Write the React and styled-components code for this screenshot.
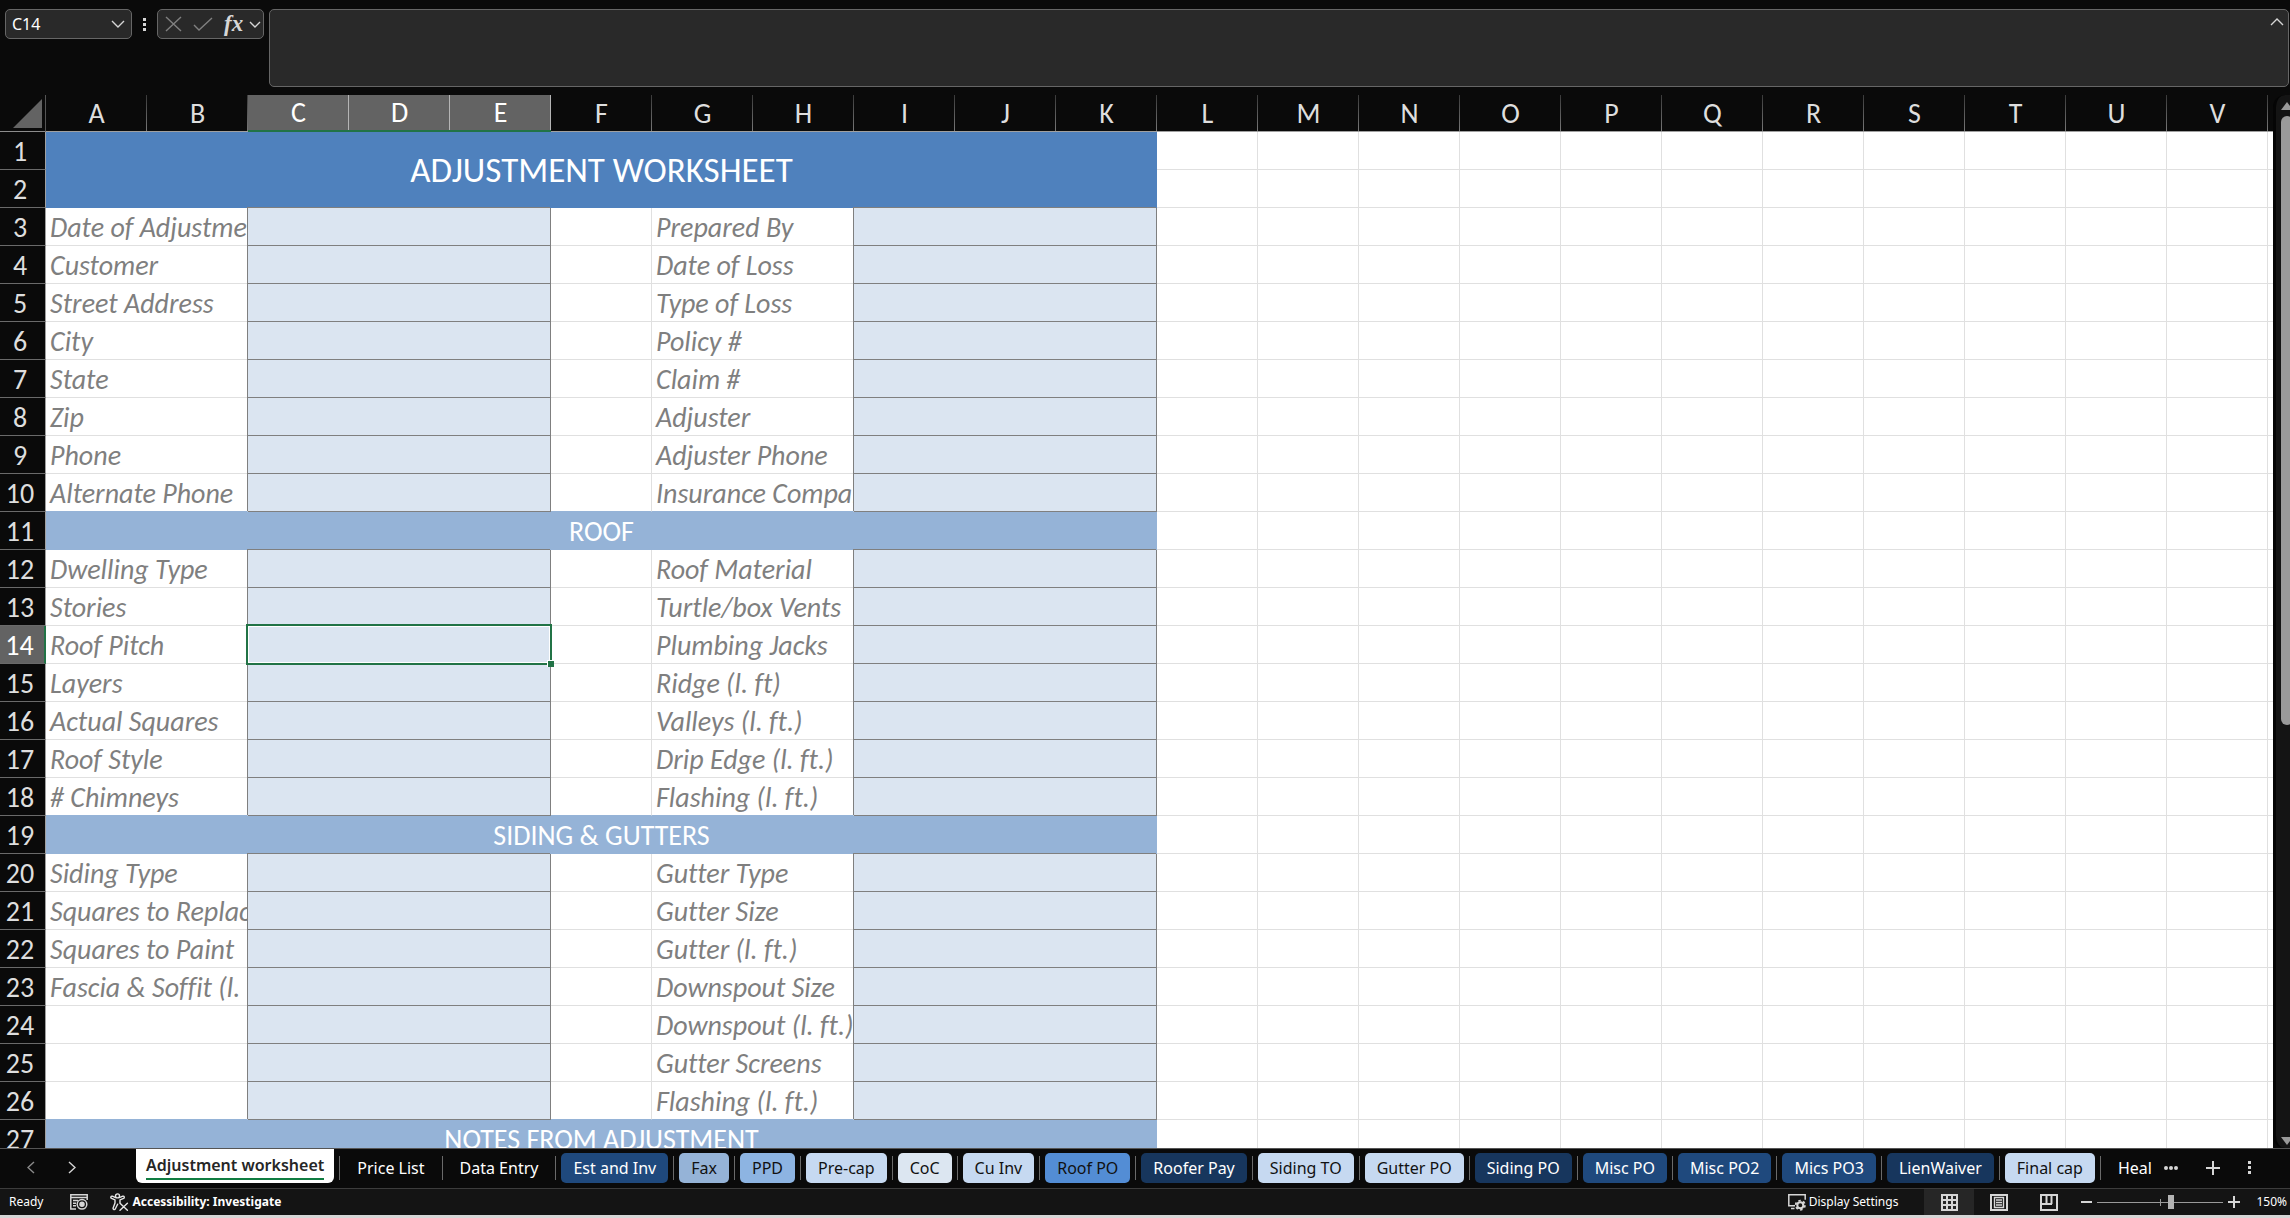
import React, { useState } from 'react'
import styled, { createGlobalStyle, css } from 'styled-components'

const GlobalStyle = createGlobalStyle`
    * {
        box-sizing: border-box;
    }
    body {
        margin: 0;
        background: #0a0a0a;
        overflow: hidden;
    }
    button, input, textarea {
        font: inherit;
        color: inherit;
        margin: 0;
    }
    svg {
        display: block;
        flex: none;
    }
`;

const uiFont = `"Segoe UI", "Noto Sans", "Open Sans", sans-serif`;
const sheetFont = `Calibri, Carlito, Lato, sans-serif`;

const lineColor = '#e0e0e0';
const inputLine = '#7f7f7f';
const sectionColor = '#95b3d7';

/* ---------- frame ---------- */

const Page = styled.div`
    display: flex;
    flex-direction: column;
    height: 100vh;
    font-family: ${uiFont};
    color: #fff;
    background: #0a0a0a;
`;

const IconButton = styled.button`
    display: flex;
    align-items: center;
    justify-content: center;
    padding: 0;
    border: 0;
    background: none;
    color: ${props => props.$color || '#d6d6d6'};
`;

/* ---------- formula bar ---------- */

const FormulaBar = styled.div`
    display: flex;
    align-items: flex-start;
    height: 95px;
    padding: 9px 1px 0 5px;
`;

const Box = styled.div`
    display: flex;
    align-items: center;
    height: 30px;
    background: #292929;
    border: 1px solid #666;
    border-radius: 5px;
`;

const NameBox = styled(Box)`
    width: 127px;
    padding: 0 6px;
`;

const NameInput = styled.input`
    flex: 1;
    min-width: 0;
    padding: 0;
    border: 0;
    outline: 0;
    background: none;
    font-size: 16px;
    line-height: 28px;
`;

const Grip = styled.div`
    display: flex;
    justify-content: center;
    width: 25px;
    padding-top: 9px;
    color: #d6d6d6;
`;

const FxBox = styled(Box)`
    width: 107px;
    padding: 0 2px 0 7px;
    gap: 11px;
`;

const FxButton = styled(IconButton)`
    font-family: "Liberation Serif", serif;
    font-style: italic;
    font-weight: 700;
    font-size: 23px;
    line-height: 28px;
    gap: 6px;
`;

const FormulaBox = styled(Box)`
    flex: 1;
    align-items: flex-start;
    height: 78px;
    margin-left: 5px;
    padding: 7px 4px;
`;

const FormulaInput = styled.textarea`
    flex: 1;
    height: 60px;
    padding: 0;
    border: 0;
    outline: 0;
    resize: none;
    background: none;
    font-size: 16px;
`;

/* ---------- sheet ---------- */

const SheetArea = styled.div`
    display: flex;
    flex: 1;
    min-height: 0;
`;

const SheetView = styled.div`
    flex: 1;
    min-width: 0;
    overflow: hidden;
`;

const Table = styled.table`
    width: 0;
    table-layout: fixed;
    border-collapse: separate;
    border-spacing: 0;
    font-family: ${sheetFont};
    font-size: 28px;
    font-variant-ligatures: none;
    line-height: 35px;
    background: #fff;
`;

const HeadCol = styled.col`
    width: 46px;
`;

const Col = styled.col`
    width: 101px;
`;

const Corner = styled.th`
    padding: 4px 3px 3px 13px;
    background: #0a0a0a;
    border-right: 1px solid #555;
    border-bottom: 1px solid #8c8c8c;
`;

const ColHead = styled.th`
    height: 37px;
    padding: 1px 0 0;
    font-weight: 400;
    line-height: 34px;
    color: #dedede;
    background: linear-gradient(#3a3a3a, #777) right / 1px 100% no-repeat #0a0a0a;
    border-bottom: 1px solid #a0a0a0;

    ${props => props.$active && css`
        color: #fff;
        background: linear-gradient(#b5b5b5, #b5b5b5) right / 1px 100% no-repeat #636363;
        border-bottom: 2px solid #217346;
    `}
`;

const RowHead = styled.th`
    height: 38px;
    padding: 2px 5px 0 0;
    font-weight: 400;
    text-align: center;
    color: ${props => props.$active ? '#fff' : '#dedede'};
    background: ${props => props.$active ? '#636363' : '#0a0a0a'};
    border-right: ${props => props.$active ? '2px solid #217346' : '1px solid #a0a0a0'};
    border-bottom: 1px solid #6a6a6a;
`;

const Cell = styled.td`
    position: relative;
    padding: 2px 0 0 4px;
    overflow: hidden;
    white-space: nowrap;
    border-right: 1px solid ${lineColor};
    border-bottom: 1px solid ${props => props.$edge ? sectionColor : lineColor};
`;

const LabelCell = styled(Cell)`
    font-style: italic;
    color: #7f7f7f;
`;

const InputCell = styled(Cell)`
    overflow: visible;
    background: #dbe5f1;
    border-right: 1px solid ${inputLine};
    border-bottom: 1px solid ${inputLine};
    box-shadow: -1px -1px 0 0 ${inputLine};
`;

const SectionCell = styled.td`
    padding: 1px 0 0;
    text-align: center;
    color: #fff;
    background: ${props => props.$title ? '#4f81bd' : sectionColor};
    font-size: ${props => props.$title ? '35px' : '28px'};
`;

const Selection = styled.div`
    position: absolute;
    inset: -2px;
    z-index: 1;
    border: 2px solid #217346;
    box-shadow: inset 0 0 0 1px #fff;

    &::after {
        content: '';
        position: absolute;
        right: -4px;
        bottom: -4px;
        width: 6px;
        height: 6px;
        background: #217346;
        border: 1px solid #fff;
        border-width: 1px 0 0 1px;
    }
`;

const Scrollbar = styled.div`
    display: flex;
    flex-direction: column;
    width: 17px;
    padding: 7px 0 3px 5px;
    overflow: hidden;
    background: #141414;
    border-left: 3px solid #050505;
    border-radius: 12px 0 0 12px;
    color: #9a9a9a;
`;

const ScrollTrack = styled.div`
    flex: 1;
    padding: 6px 0;
`;

const ScrollThumb = styled.div`
    width: 12px;
    height: 60%;
    background: #9a9a9a;
    border-radius: 6px;
`;

/* ---------- tabs ---------- */

const TabBar = styled.div`
    display: flex;
    height: 40px;
    border-top: 1px solid #555;
`;

const TabNav = styled.div`
    display: flex;
    align-items: flex-start;
    gap: 33px;
    width: 136px;
    padding: 12px 0 0 27px;
`;

const TabList = styled.div`
    display: flex;
    flex: 1;
    min-width: 0;
    overflow: hidden;
`;

const TabItem = styled.div`
    display: flex;
    flex: none;
    align-items: flex-start;

    &::after {
        content: '';
        width: 1px;
        height: 24px;
        margin: 7px 5px 0;
        background: #6a6a6a;
    }
`;

const Tab = styled.button`
    height: 30px;
    margin-top: 4px;
    padding: 0 12px;
    border: 0;
    border-radius: 5px;
    font-size: 16px;
    line-height: 30px;
    white-space: nowrap;
    color: ${props => props.$dark ? '#111' : '#fff'};
    background: ${props => props.$bg || 'transparent'};
`;

const ActiveTab = styled(Tab)`
    height: 35px;
    margin-top: -1px;
    padding: 4px 10px 3px;
    border-radius: 0 0 6px 6px;
    font-weight: 600;
    line-height: 26px;
    color: #262626;
    background: #fff;

    span {
        display: block;
        height: 28px;
        border-bottom: 2px solid #107c41;
    }
`;

const TabTools = styled.div`
    display: flex;
    align-items: flex-start;
    gap: 28px;
    padding: 12px 38px 0 12px;
`;

/* ---------- status bar ---------- */

const StatusBar = styled.div`
    display: flex;
    align-items: center;
    height: 30px;
    padding: 0 3px 0 9px;
    border-top: 1px solid #3c3c3c;
    border-bottom: 3px solid #d6d6d6;
    background: #141414;
    font-size: 12px;
    line-height: 26px;
`;

const StatusItem = styled.div`
    display: flex;
    align-items: center;
    gap: 3px;
    margin-right: ${props => props.$space || 0}px;
    font-weight: ${props => props.$bold ? 700 : 400};
`;

const Spacer = styled.div`
    flex: 1;
`;

const ViewButton = styled(IconButton)`
    width: 50px;
    height: 26px;
    background: ${props => props.$active ? '#262626' : 'none'};
`;

const Zoom = styled.div`
    display: flex;
    align-items: center;
    gap: 5px;
    margin: 0 16px 0 7px;
`;

const ZoomSlider = styled.input`
    appearance: none;
    width: 126px;
    height: 14px;
    background:
        linear-gradient(#9a9a9a, #9a9a9a) center / 100% 1px no-repeat,
        linear-gradient(#9a9a9a, #9a9a9a) center / 1px 7px no-repeat;

    &::-webkit-slider-thumb {
        appearance: none;
        width: 6px;
        height: 14px;
        background: #b3b3b3;
    }
`;

const fields = [
    ['Date of Adjustment', 'Prepared By'],
    ['Customer', 'Date of Loss'],
    ['Street Address', 'Type of Loss'],
    ['City', 'Policy #'],
    ['State', 'Claim #'],
    ['Zip', 'Adjuster'],
    ['Phone', 'Adjuster Phone'],
    ['Alternate Phone', 'Insurance Company'],
    'ROOF',
    ['Dwelling Type', 'Roof Material'],
    ['Stories', 'Turtle/box Vents'],
    ['Roof Pitch', 'Plumbing Jacks'],
    ['Layers', 'Ridge (l. ft)'],
    ['Actual Squares', 'Valleys (l. ft.)'],
    ['Roof Style', 'Drip Edge (l. ft.)'],
    ['# Chimneys', 'Flashing (l. ft.)'],
    'SIDING & GUTTERS',
    ['Siding Type', 'Gutter Type'],
    ['Squares to Replace', 'Gutter Size'],
    ['Squares to Paint', 'Gutter (l. ft.)'],
    ['Fascia & Soffit (l. ft.)', 'Downspout Size'],
    ['', 'Downspout (l. ft.)'],
    ['', 'Gutter Screens'],
    ['', 'Flashing (l. ft.)'],
    'NOTES FROM ADJUSTMENT',
];

const tabs = [
    { name: 'Price List' },
    { name: 'Data Entry' },
    { name: 'Est and Inv', bg: '#1f497d' },
    { name: 'Fax', bg: '#95b3d7', dark: true },
    { name: 'PPD', bg: '#8db4e2', dark: true },
    { name: 'Pre-cap', bg: '#c6d9f1', dark: true },
    { name: 'CoC', bg: '#dce6f1', dark: true },
    { name: 'Cu Inv', bg: '#c6d9f1', dark: true },
    { name: 'Roof PO', bg: '#538dd5', dark: true },
    { name: 'Roofer Pay', bg: '#17365d' },
    { name: 'Siding TO', bg: '#c6d9f1', dark: true },
    { name: 'Gutter PO', bg: '#c6d9f1', dark: true },
    { name: 'Siding PO', bg: '#17365d' },
    { name: 'Misc PO', bg: '#1f497d' },
    { name: 'Misc PO2', bg: '#1f497d' },
    { name: 'Mics PO3', bg: '#1f497d' },
    { name: 'LienWaiver', bg: '#17365d' },
    { name: 'Final cap', bg: '#c6d9f1', dark: true },
    { name: 'Heal' },
];

const columns = 'ABCDEFGHIJKLMNOPQRSTUV'.split('');
const activeColumns = ['C', 'D', 'E'];
const activeRow = 14;
// one unnamed column runs off the right edge
const freeColumns = [...columns.slice(11), 'rest'];

const Stroke = ({ w, h, d, width = 1.4 }) => (
    <svg width={w} height={h} viewBox={`0 0 ${w} ${h}`} fill="none" stroke="currentColor" strokeWidth={width}>
        <path d={d}/>
    </svg>
)

const Dots = ({ vertical }) => (
    <svg width={vertical ? 4 : 14} height={14} fill="currentColor">
        {[0, 5, 10].map(n => vertical
            ? <rect key={n} x="0" y={n} width="3" height="3"/>
            : <circle key={n} cx={n + 2} cy="7" r="2"/>)}
    </svg>
)

const MacroIcon = () => (
    <svg width="18" height="16" viewBox="0 0 18 16" fill="none" stroke="#d6d6d6" strokeWidth="1.5">
        <path d="M6 15H.8V.8h16.4V6M1 3.6h16M3 6.6h5M3 9.2h3M3 11.8h3"/>
        <circle cx="12" cy="10.3" r="4.8"/>
        <circle cx="12" cy="10.3" r="2" fill="#d6d6d6"/>
    </svg>
)

const AccessibilityIcon = () => (
    <svg width="19" height="18" viewBox="0 0 19 18" fill="none" stroke="#e6e6e6" strokeWidth="1.4" strokeLinejoin="round" strokeLinecap="round">
        <circle cx="7.5" cy="2.9" r="2"/>
        <path d="M5.6 4.6L2.4 3.2C.8 2.8.2 4.9 1.6 5.4L5 6.9v3l-1.9 5c-.3 1.7 1.6 2.3 2.3.9l2.2-4.6"/>
        <path d="M9.4 4.6l3.4-1.4c1.5-.4 2.1 1.6.8 2.2L10 6.9v2.6"/>
        <path d="M10 10.3l7.4 6.9M17.4 10.3L10 17.2"/>
    </svg>
)

const DisplayIcon = () => (
    <svg width="18" height="17" viewBox="0 0 18 17" fill="none" stroke="#d6d6d6" strokeWidth="1.5">
        <path d="M7 11.8H.8V.8h16.4v5M3 14.6h3.5"/>
        <circle cx="12.3" cy="11.2" r="3" strokeWidth="2"/>
        <circle cx="12.3" cy="11.2" r="4.6" strokeWidth="1.8" strokeDasharray="2.4 2.4"/>
    </svg>
)

const NormalIcon = () => <Stroke w={17} h={17} width={2} d="M1 1h15v15H1zM6 1v15M11 1v15M1 6h15M1 11h15"/>

const LayoutIcon = () => (
    <svg width="18" height="17" fill="none" stroke="currentColor">
        <path strokeWidth="2" d="M1 1h16v15H1z"/>
        <path strokeWidth="1.4" d="M4.5 3.5h9v10h-9zM6 6h6M6 8.5h6M6 11h6"/>
    </svg>
)

const BreakIcon = () => <Stroke w={18} h={17} width={2} d="M1 1h16v15H1zM6.5 1v9M11.5 1v9M1 10h11"/>

const FieldRow = ({ number, labels, edge }) => (
    <>
        <LabelCell colSpan={2} $edge={edge}>{labels[0]}</LabelCell>
        <InputCell colSpan={3}>{number === activeRow && <Selection/>}</InputCell>
        <Cell $edge={edge}/>
        <LabelCell colSpan={2} $edge={edge}>{labels[1]}</LabelCell>
        <InputCell colSpan={3}/>
    </>
)

const FreeCells = () => freeColumns.map(name => <Cell key={name}/>)

const Sheet = () => {
    return (
        <Table>
            <colgroup>
                <HeadCol/>
                {columns.map(name => <Col key={name}/>)}
                <Col/>
            </colgroup>
            <thead>
                <tr>
                    <Corner aria-label="Select all">
                        <svg width="29" height="29" fill="#636363"><path d="M29 0v29H0z"/></svg>
                    </Corner>
                    {columns.map(name => (
                        <ColHead key={name} $active={activeColumns.includes(name)}>{name}</ColHead>
                    ))}
                    <ColHead/>
                </tr>
            </thead>
            <tbody>
                <tr>
                    <RowHead>1</RowHead>
                    <SectionCell colSpan={11} rowSpan={2} $title>ADJUSTMENT WORKSHEET</SectionCell>
                    <FreeCells/>
                </tr>
                <tr>
                    <RowHead>2</RowHead>
                    <FreeCells/>
                </tr>
                {fields.map((item, i) => {
                    const number = i + 3
                    return (
                        <tr key={number}>
                            <RowHead $active={number === activeRow}>{number}</RowHead>
                            {typeof item === 'string'
                                ? <SectionCell colSpan={11}>{item}</SectionCell>
                                : <FieldRow number={number} labels={item} edge={typeof fields[i + 1] === 'string'}/>}
                            <FreeCells/>
                        </tr>
                    )
                })}
            </tbody>
        </Table>
    )
}

const App = () => {
    const [cell, setCell] = useState('C14')
    const [formula, setFormula] = useState('')
    const [zoom, setZoom] = useState(59)

    return (
        <Page>
            <GlobalStyle/>
            <FormulaBar>
                <NameBox>
                    <NameInput aria-label="Name box" value={cell} onChange={e => setCell(e.target.value)}/>
                    <IconButton aria-label="Open name list"><Stroke w={14} h={8} d="M1 1l6 6 6-6"/></IconButton>
                </NameBox>
                <Grip><Dots vertical/></Grip>
                <FxBox>
                    <IconButton aria-label="Cancel" $color="#808080"><Stroke w={17} h={16} d="M1 1l15 14M16 1L1 15"/></IconButton>
                    <IconButton aria-label="Enter" $color="#808080"><Stroke w={20} h={14} d="M1 8l5 5L19 1"/></IconButton>
                    <FxButton aria-label="Insert function">fx<Stroke w={12} h={7} d="M1 1l5 5 5-5"/></FxButton>
                </FxBox>
                <FormulaBox>
                    <FormulaInput aria-label="Formula" value={formula} onChange={e => setFormula(e.target.value)}/>
                    <IconButton aria-label="Collapse formula bar"><Stroke w={14} h={9} d="M1 8l6-6 6 6"/></IconButton>
                </FormulaBox>
            </FormulaBar>
            <SheetArea>
                <SheetView>
                    <Sheet/>
                </SheetView>
                <Scrollbar>
                    <svg width="12" height="8" fill="currentColor"><path d="M6 0l6 8H0z"/></svg>
                    <ScrollTrack><ScrollThumb/></ScrollTrack>
                    <svg width="12" height="8" fill="currentColor"><path d="M0 0h12L6 8z"/></svg>
                </Scrollbar>
            </SheetArea>
            <TabBar>
                <TabNav>
                    <IconButton aria-label="Previous sheet" $color="#8a8a8a"><Stroke w={8} h={13} d="M7 1L1 6.500l6 5.500"/></IconButton>
                    <IconButton aria-label="Next sheet"><Stroke w={8} h={13} d="M1 1l6 5.500-6 5.500"/></IconButton>
                </TabNav>
                <TabList>
                    <TabItem><ActiveTab><span>Adjustment worksheet</span></ActiveTab></TabItem>
                    {tabs.map(tab => (
                        <TabItem key={tab.name}>
                            <Tab $bg={tab.bg} $dark={tab.dark}>{tab.name}</Tab>
                        </TabItem>
                    ))}
                </TabList>
                <TabTools>
                    <IconButton aria-label="More sheets"><Dots/></IconButton>
                    <IconButton aria-label="Add sheet"><Stroke w={14} h={14} width={2} d="M7 0v14M0 7h14"/></IconButton>
                    <IconButton aria-label="Sheet options"><Dots vertical/></IconButton>
                </TabTools>
            </TabBar>
            <StatusBar>
                <StatusItem $space={27}>Ready</StatusItem>
                <StatusItem $space={22}><MacroIcon/></StatusItem>
                <StatusItem $bold><AccessibilityIcon/>Accessibility: Investigate</StatusItem>
                <Spacer/>
                <StatusItem $space={26}><DisplayIcon/>Display Settings</StatusItem>
                <ViewButton aria-label="Normal" $active><NormalIcon/></ViewButton>
                <ViewButton aria-label="Page layout"><LayoutIcon/></ViewButton>
                <ViewButton aria-label="Page break preview"><BreakIcon/></ViewButton>
                <Zoom>
                    <IconButton aria-label="Zoom out"><Stroke w={11} h={12} width={2} d="M0 6h11"/></IconButton>
                    <ZoomSlider type="range" aria-label="Zoom" value={zoom} onChange={e => setZoom(e.target.value)}/>
                    <IconButton aria-label="Zoom in"><Stroke w={12} h={12} width={2} d="M0 6h12M6 0v12"/></IconButton>
                </Zoom>
                <StatusItem>150%</StatusItem>
            </StatusBar>
        </Page>
    )
}

export default App
